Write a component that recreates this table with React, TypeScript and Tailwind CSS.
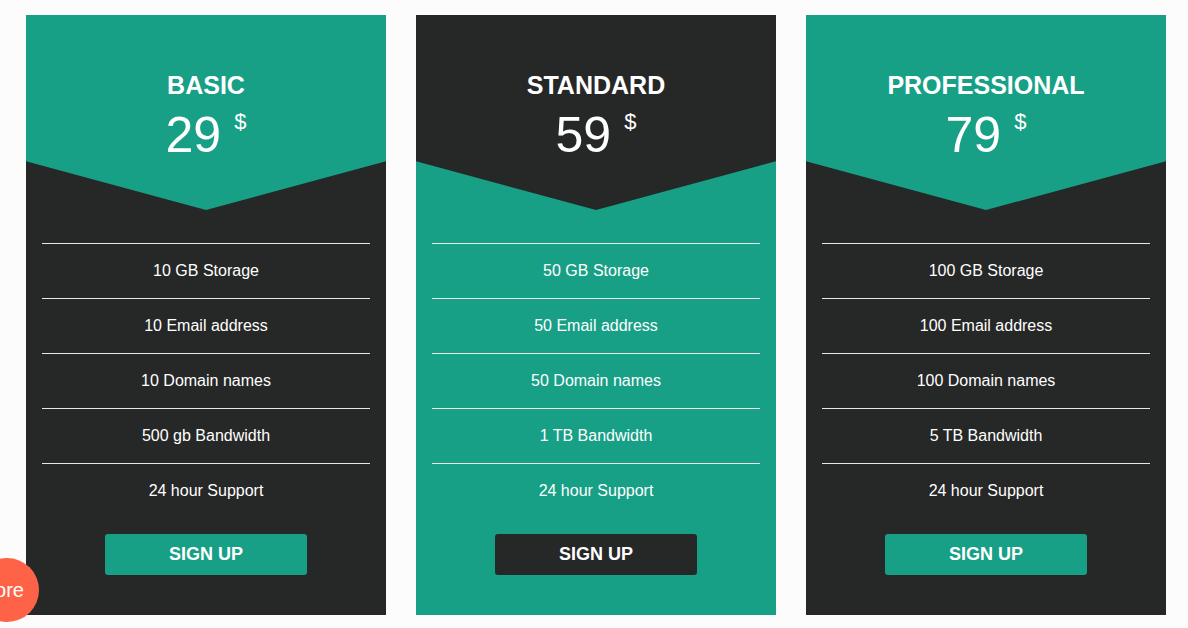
const plans = [
  {
    name: "BASIC",
    price: "29",
    dark: true,
    features: ["10 GB Storage", "10 Email address", "10 Domain names", "500 gb Bandwidth", "24 hour Support"],
  },
  {
    name: "STANDARD",
    price: "59",
    dark: false,
    features: ["50 GB Storage", "50 Email address", "50 Domain names", "1 TB Bandwidth", "24 hour Support"],
  },
  {
    name: "PROFESSIONAL",
    price: "79",
    dark: true,
    features: ["100 GB Storage", "100 Email address", "100 Domain names", "5 TB Bandwidth", "24 hour Support"],
  },
];

function PlanCard({ plan }: { plan: (typeof plans)[number] }) {
  // dark body with teal header, or the other way round
  const body = plan.dark ? "bg-[#262727]" : "bg-[#17a086]";
  const head = plan.dark ? "bg-[#17a086]" : "bg-[#262727]";
  const button = plan.dark ? "bg-[#17a086]" : "bg-[#262727]";

  return (
    <div className={`w-[360px] h-[600px] flex flex-col text-white ${body}`}>
      <div
        className={`h-[195px] flex flex-col items-center pt-[55px] ${head} [clip-path:polygon(0_0,100%_0,100%_75%,50%_100%,0_75%)]`}
      >
        <h2 className="text-[25px] leading-[30px] font-bold">{plan.name}</h2>
        <div className="mt-[10px] flex items-start">
          <span className="text-[50px] leading-[50px]">{plan.price}</span>
          <span className="text-[22px] leading-[22px] ml-[13px] mt-[1px]">$</span>
        </div>
      </div>

      <ul className="mt-[33px] mx-4 flex flex-col">
        {plan.features.map((f) => (
          <li
            key={f}
            className="h-[55px] flex items-center justify-center text-base border-t border-[#e8e8e8]"
          >
            {f}
          </li>
        ))}
      </ul>

      <div className="flex justify-center mt-[16px]">
        <button className={`w-[202px] h-[41px] rounded-[3px] text-[18px] font-bold ${button}`}>
          SIGN UP
        </button>
      </div>
    </div>
  );
}

export default function App() {
  return (
    <div className="relative w-[1188px] h-[628px] overflow-hidden bg-[#fcfcfc] font-['Liberation_Sans',Arial,sans-serif]">
      <div className="flex gap-[30px] pl-[26px] pt-[15px]">
        {plans.map((p) => (
          <PlanCard key={p.name} plan={p} />
        ))}
      </div>

      <div className="absolute left-[-25px] top-[558px] w-16 h-16 rounded-full bg-[#ff6347] flex items-center justify-end pr-[15px] text-white text-[20px]">
        More
      </div>
    </div>
  );
}
